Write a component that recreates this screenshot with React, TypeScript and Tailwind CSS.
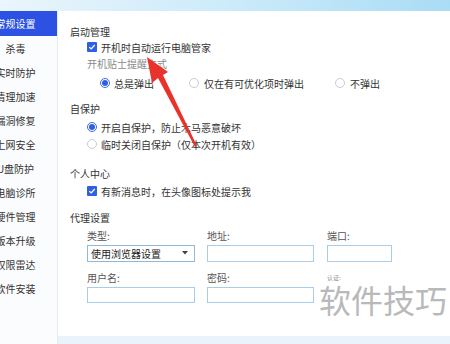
import React from "react";

const navItems = [
  "常规设置",
  "杀毒",
  "实时防护",
  "清理加速",
  "漏洞修复",
  "上网安全",
  "U盘防护",
  "电脑诊所",
  "硬件管理",
  "版本升级",
  "权限雷达",
  "软件安装",
];

function Checkbox() {
  return (
    <span className="flex h-[10px] w-[10px] items-center justify-center rounded-[1px] bg-[#2f5fe3]">
      <svg width="8" height="8" viewBox="0 0 8 8">
        <path d="M1.3 4.1 L3.2 5.9 L6.7 2" fill="none" stroke="#fff" strokeWidth="1.3" />
      </svg>
    </span>
  );
}

function Radio({ on }: { on?: boolean }) {
  return on ? (
    <span className="flex h-[10px] w-[10px] items-center justify-center rounded-full border border-[#3c6be6] bg-white">
      <span className="h-[6px] w-[6px] rounded-full bg-[#2f5fe3]" />
    </span>
  ) : (
    <span className="h-[10px] w-[10px] rounded-full border border-[#c9ccd1] bg-white" />
  );
}

export default function App() {
  return (
    <div
      className="relative flex h-[344px] w-[450px] flex-col overflow-hidden bg-white text-[10px] text-[#333]"
      style={{ fontFamily: '"Noto Sans CJK SC", "Noto Sans", sans-serif' }}
    >
      <div className="h-[11px] w-full bg-gradient-to-r from-[#eaf5fc] via-[#cdebfa] to-[#a9dcf5]" />
      <div className="flex flex-1">
        {/* sidebar */}
        <div className="w-[58px] border-r border-[#e6ebf1] bg-[#fbfcfd]">
          {navItems.map((t, i) => (
            <div
              key={t}
              className={
                i === 0
                  ? "flex h-[25px] items-center justify-center bg-[#2d52e3] pr-[26px] text-white"
                  : "flex h-[24px] items-center justify-center pr-[26px] text-[#333]"
              }
            >
              <span className="whitespace-nowrap">{t}</span>
            </div>
          ))}
        </div>
        {/* content */}
        <div className="flex flex-1 flex-col">
          <div className="flex-1 pl-[12px] pt-[12px]">
            <div className="flex h-[16px] items-center">启动管理</div>
            <div className="pl-[17px]">
              <div className="flex h-[16px] items-center gap-[4px]">
                <Checkbox />
                <span>开机时自动运行电脑管家</span>
              </div>
              <div className="flex h-[16px] items-center text-[#8a8a8a]">开机贴士提醒方式</div>
              <div className="mt-[4px] flex h-[16px] items-center pl-[13px]">
                <div className="flex w-[89px] items-center gap-[4px]">
                  <Radio on />
                  <span>总是弹出</span>
                </div>
                <div className="flex w-[146px] items-center gap-[5px]">
                  <Radio />
                  <span>仅在有可优化项时弹出</span>
                </div>
                <div className="flex items-center gap-[5px]">
                  <Radio />
                  <span>不弹出</span>
                </div>
              </div>
            </div>

            <div className="mt-[9px] flex h-[16px] items-center">自保护</div>
            <div className="pl-[17px]">
              <div className="mt-[3px] flex h-[16px] items-center gap-[4px]">
                <Radio on />
                <span>开启自保护，防止木马恶意破坏</span>
              </div>
              <div className="mt-[1px] flex h-[16px] items-center gap-[4px]">
                <Radio />
                <span>临时关闭自保护（仅本次开机有效）</span>
              </div>
            </div>

            <div className="mt-[13px] flex h-[16px] items-center">个人中心</div>
            <div className="pl-[17px]">
              <div className="mt-[2px] flex h-[16px] items-center gap-[4px]">
                <Checkbox />
                <span>有新消息时，在头像图标处提示我</span>
              </div>
            </div>

            <div className="mt-[10px] flex h-[16px] items-center">代理设置</div>
            <div className="pl-[17px] text-[#555]">
              <div className="mt-[2px] flex h-[16px] items-center">
                <span className="w-[120px]">类型:</span>
                <span className="w-[120px]">地址:</span>
                <span>端口:</span>
              </div>
              <div className="mt-[2px] flex h-[16px] items-center">
                <div className="mr-[12px] flex h-[17px] w-[108px] items-center justify-between border border-[#8fb8dc] bg-white pl-[3px] pr-[6px] text-[#222]">
                  <span>使用浏览器设置</span>
                  <svg width="6" height="4" viewBox="0 0 6 4">
                    <path d="M0 0 L6 0 L3 3.5 Z" fill="#444" />
                  </svg>
                </div>
                <div className="mr-[13px] h-[17px] w-[107px] border border-[#a9cde6] bg-white" />
                <div className="h-[17px] w-[65px] border border-[#a9cde6] bg-white" />
              </div>
              <div className="mt-[8px] flex h-[16px] items-center">
                <span className="w-[120px]">用户名:</span>
                <span className="w-[120px]">密码:</span>
                <span className="text-[6px] text-[#888]">认证:</span>
              </div>
              <div className="mt-[2px] flex h-[16px] items-center">
                <div className="mr-[12px] h-[16px] w-[108px] border border-[#a9cde6] bg-white" />
                <div className="h-[16px] w-[107px] border border-[#a9cde6] bg-white" />
              </div>
            </div>
          </div>
          <div className="h-[8px] bg-[#eaf3fc]" />
        </div>
      </div>

      {/* watermark */}
      <div className="pointer-events-none absolute left-[319px] top-[283px] text-[32px] leading-none text-[#b9b9b9]">
        软件技巧
      </div>

      {/* red arrow annotation */}
      <svg className="pointer-events-none absolute left-0 top-0" width="450" height="344">
        <polygon
          points="147,57 168,72 163,75 197,146 195,147 158,78 152,83"
          fill="#e8322b"
        />
      </svg>
    </div>
  );
}
